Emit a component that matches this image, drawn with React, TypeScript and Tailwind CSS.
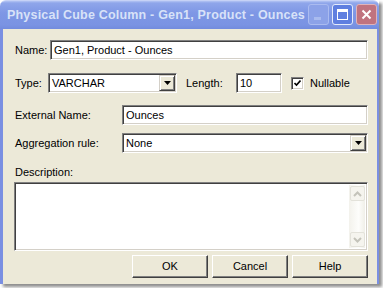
import React from 'react';

const sunken =
  'bg-white border border-t-[#808080] border-l-[#808080] border-b-white border-r-white shadow-[inset_1px_1px_0_#404040,inset_-1px_-1px_0_#d4d0c8]';

function DropButton() {
  return (
    <div className="w-[16px] h-[16px] bg-[#ece9d8] border border-t-[#d4d0c8] border-l-[#d4d0c8] border-b-[#404040] border-r-[#404040] shadow-[inset_1px_1px_0_#ffffff,inset_-1px_-1px_0_#808080] flex items-center justify-center">
      <svg width="7" height="4" viewBox="0 0 7 4">
        <path d="M0 0h7L3.5 4z" fill="#000" />
      </svg>
    </div>
  );
}

function TextBox({ value, className }: { value: string; className: string }) {
  return (
    <div className={`${sunken} h-[20px] flex items-center pl-[3px] ${className}`}>
      <span>{value}</span>
    </div>
  );
}

function Combo({ value, className }: { value: string; className: string }) {
  return (
    <div className={`${sunken} h-[20px] flex items-center justify-between pl-[3px] pr-[1px] ${className}`}>
      <span>{value}</span>
      <DropButton />
    </div>
  );
}

function PushButton({ label }: { label: string }) {
  return (
    <button className="w-[76px] h-[23px] bg-[#ece9d8] border border-t-white border-l-white border-b-[#404040] border-r-[#404040] shadow-[inset_-1px_-1px_0_#808080] text-[11px] text-black">
      {label}
    </button>
  );
}

function ScrollArrow({ up }: { up: boolean }) {
  return (
    <div className="w-[15px] h-[15px] rounded-[2px] border border-[#e3e2da] bg-[#f5f4ee] flex items-center justify-center">
      <svg width="9" height="6" viewBox="0 0 9 6">
        <path d={up ? 'M1 5l3.5-3.5L8 5' : 'M1 1l3.5 3.5L8 1'} stroke="#c4c3ba" strokeWidth="2" fill="none" />
      </svg>
    </div>
  );
}

function CaptionButton({ kind }: { kind: 'min' | 'max' | 'close' }) {
  const tone =
    kind === 'close'
      ? 'bg-[#c0737f] border-[#dfb3ba]'
      : kind === 'max'
        ? 'bg-[#5f7fe0] border-[#e4ebfb]'
        : 'bg-[#8ca2e8] border-[#aabbf0]';
  return (
    <div className={`w-[21px] h-[21px] rounded-[3px] border ${tone} flex items-center justify-center`}>
      {kind === 'min' && <div className="w-[7px] h-[3px] bg-[#a9bbef] mt-[9px] mr-[3px]" />}
      {kind === 'max' && <div className="w-[11px] h-[11px] border border-white border-t-[3px]" />}
      {kind === 'close' && (
        <svg width="11" height="11" viewBox="0 0 11 11">
          <path d="M1.5 1.5l8 8M9.5 1.5l-8 8" stroke="#fff" strokeWidth="2" />
        </svg>
      )}
    </div>
  );
}

export default function App() {
  return (
    <div className="w-[383px] h-[288px] bg-white overflow-hidden text-[11px] text-black font-['Liberation_Sans',Arial,sans-serif]">
      <div className="w-[379px] h-[284px] flex flex-col shadow-[3px_3px_3px_rgba(0,0,0,0.45)]">
        <div className="h-[29px] flex items-center justify-between pl-[7px] pr-[2px] bg-[linear-gradient(to_bottom,#b3c4f3_0px,#8fa6ea_2px,#7e97e5_12px,#7a93e3_24px,#7089dc_29px)] border-t border-[#c6d2f6] rounded-t-[6px]">
          <span className="whitespace-nowrap text-[12.5px] font-bold text-[#d8e2f8] tracking-[0.2px]">
            Physical Cube Column - Gen1, Product - Ounces
          </span>
          <div className="flex gap-[3px] pb-[2px]">
            <CaptionButton kind="min" />
            <CaptionButton kind="max" />
            <CaptionButton kind="close" />
          </div>
        </div>
        <div className="flex-1 bg-[#ece9d8] border-l-[3px] border-r-[2px] border-[#7a8fe2] pl-[11px] pr-[9px] pt-[11px] flex flex-col">
          <div className="flex items-center h-[20px]">
            <span className="w-[36px] pl-[1px]">Name:</span>
            <TextBox value="Gen1, Product - Ounces" className="flex-1" />
          </div>
          <div className="flex items-center h-[20px] mt-[13px]">
            <span className="w-[34px] pl-[1px]">Type:</span>
            <Combo value="VARCHAR" className="w-[129px]" />
            <span className="ml-[9px] w-[50px]">Length:</span>
            <TextBox value="10" className="w-[46px]" />
            <div className={`${sunken} ml-[9px] w-[13px] h-[13px] flex items-center justify-center`}>
              <svg width="7" height="7" viewBox="0 0 7 7">
                <path d="M0.5 3l2 2 4-4.5" stroke="#000" strokeWidth="1.6" fill="none" />
              </svg>
            </div>
            <span className="ml-[6px]">Nullable</span>
          </div>
          <div className="flex items-center h-[20px] mt-[12px]">
            <span className="w-[108px] pl-[1px]">External Name:</span>
            <TextBox value="Ounces" className="flex-1" />
          </div>
          <div className="flex items-center h-[20px] mt-[8px]">
            <span className="w-[108px] pl-[1px]">Aggregation rule:</span>
            <Combo value="None" className="flex-1" />
          </div>
          <div className="mt-[13px] h-[13px] leading-[13px] pl-[1px]">Description:</div>
          <div className={`${sunken} mt-[3px] h-[69px] flex justify-end p-[2px]`}>
            <div className="w-[16px] h-full bg-[linear-gradient(to_right,#f3f2ec,#fdfdfb_60%,#f0efe8)] flex flex-col justify-between items-center py-[1px]">
              <ScrollArrow up />
              <ScrollArrow up={false} />
            </div>
          </div>
          <div className="mt-[4px] flex justify-end gap-[4px]">
            <PushButton label="OK" />
            <PushButton label="Cancel" />
            <PushButton label="Help" />
          </div>
        </div>
      </div>
    </div>
  );
}
